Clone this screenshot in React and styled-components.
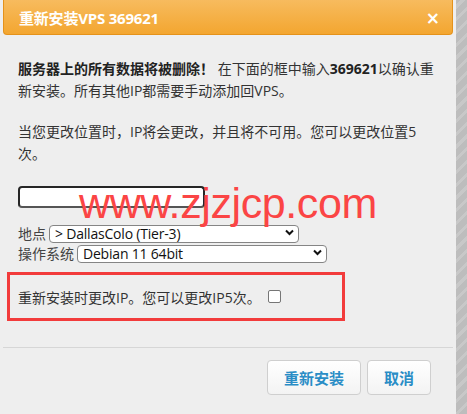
import React from "react"
import styled, { createGlobalStyle } from "styled-components"

const Global = createGlobalStyle`
  html, body {
    margin: 0;
    padding: 0;
    background: #eeeeee;
  }
  body {
    font-family: "Open Sans", "Noto Sans CJK SC", sans-serif;
  }
`

const CJK = `"Open Sans", "Noto Sans CJK SC", sans-serif`

const Page = styled.div`
  display: flex;
  width: 467px;
  height: 414px;
  overflow: hidden;
`

const Dialog = styled.div`
  position: relative;
  width: 456px;
  flex-shrink: 0;
  background: #eeeeee;
  display: flex;
  flex-direction: column;
`

const Backdrop = styled.div`
  flex: 1;
  background: repeating-linear-gradient(
    -45deg,
    #bdbdbd 0px,
    #bdbdbd 6px,
    #c8c8c8 6px,
    #c8c8c8 9px
  );
`

const Header = styled.div`
  margin: 0 3px;
  height: 35px;
  box-sizing: border-box;
  border: 1px solid #e5921a;
  border-top: none;
  border-radius: 0 0 4px 4px;
  background: linear-gradient(#f7bb5e, #f3a630);
  display: flex;
  align-items: center;
  justify-content: space-between;
  padding: 0 12px 0 15px;
`

const Title = styled.h3`
  margin: 0;
  color: #fff;
  font: bold 15px ${CJK};
  letter-spacing: -0.2px;
`

const Close = styled.span`
  color: #fff;
  font: bold 17px "DejaVu Sans", sans-serif;
  line-height: 1;
  margin-top: 2px;
`

const Body = styled.div`
  padding: 23px 18px 0 18px;
  font: 14px/22px ${CJK};
  color: #333;
`

const Para = styled.p`
  margin: 0 0 19px;
  width: 420px;
  strong {
    font-weight: bold;
    color: #222;
  }
`

const Confirm = styled.input`
  display: block;
  width: 187px;
  height: 22px;
  box-sizing: border-box;
  margin: 21px 0 16px;
  border: 2px solid #262626;
  border-bottom-color: #555;
  border-radius: 4px;
  background: #fff;
  outline: none;
`

const Field = styled.label`
  display: flex;
  align-items: center;
  gap: 3px;
  height: 18px;
  margin-bottom: 2px;
  color: #444;
  font: 14px ${CJK};
`

const SelectWrap = styled.div`
  position: relative;
  width: 250px;
  height: 18px;
`

const Select = styled.select`
  appearance: none;
  width: 100%;
  height: 100%;
  box-sizing: border-box;
  border: 1px solid #858585;
  border-radius: 4px;
  background: #fff;
  color: #111;
  font: 14px "Open Sans", sans-serif;
  letter-spacing: -0.2px;
  padding: 0 0 0 5px;
  line-height: 16px;
`

const Chevron = styled.svg`
  position: absolute;
  right: 5px;
  top: 5px;
  pointer-events: none;
`

const Callout = styled.div`
  margin: 10px 0 0 -11px;
  width: 338px;
  height: 49px;
  box-sizing: border-box;
  border: 3px solid #f23b3b;
  display: flex;
  align-items: center;
  gap: 7px;
  padding: 0 0 0 8px;
  color: #333;
  font: 14px ${CJK};
`

const Check = styled.input`
  appearance: none;
  width: 13px;
  height: 13px;
  margin: 0;
  border: 1px solid #767676;
  border-radius: 2px;
  background: #fff;
`

const Divider = styled.hr`
  margin: 26px 3px 0;
  border: none;
  border-top: 1px solid #d6d6d6;
`

const Footer = styled.div`
  display: flex;
  justify-content: flex-end;
  gap: 6px;
  padding: 12px 25px 0 0;
`

const Button = styled.button`
  width: ${p => p.w}px;
  height: 35px;
  border: 1px solid #cfcfcf;
  border-radius: 4px;
  background: linear-gradient(#ffffff, #f3f3f3);
  color: #2a8dc6;
  font: bold 15px ${CJK};
  padding: 0;
`

const Watermark = styled.div`
  position: absolute;
  left: 79px;
  top: 182px;
  font: 43px/43px "Liberation Sans", Arial, sans-serif;
  color: #fb4545;
  letter-spacing: -0.4px;
  pointer-events: none;
`

const Down = () => (
  <Chevron width="9" height="7" viewBox="0 0 9 7">
    <path d="M1 1.5 L4.5 5 L8 1.5" fill="none" stroke="#111" strokeWidth="2" />
  </Chevron>
)

export default function App() {
  return (
    <Page>
      <Global />
      <Dialog>
        <Header>
          <Title>重新安装VPS 369621</Title>
          <Close>×</Close>
        </Header>
        <Body>
          <Para>
            <strong>服务器上的所有数据将被删除！</strong> 在下面的框中输入<strong>369621</strong>以确认重新安装。所有其他IP都需要手动添加回VPS。
          </Para>
          <Para>当您更改位置时，IP将会更改，并且将不可用。您可以更改位置5次。</Para>
          <Confirm type="text" />
          <Field>
            地点
            <SelectWrap>
              <Select defaultValue="dallas">
                <option value="dallas">&gt; DallasColo (Tier-3)</option>
              </Select>
              <Down />
            </SelectWrap>
          </Field>
          <Field>
            操作系统
            <SelectWrap>
              <Select defaultValue="deb11">
                <option value="deb11">Debian 11 64bit</option>
              </Select>
              <Down />
            </SelectWrap>
          </Field>
          <Callout>
            重新安装时更改IP。您可以更改IP5次。
            <Check type="checkbox" />
          </Callout>
        </Body>
        <Divider />
        <Footer>
          <Button w={94}>重新安装</Button>
          <Button w={64}>取消</Button>
        </Footer>
        <Watermark>www.zjzjcp.com</Watermark>
      </Dialog>
      <Backdrop />
    </Page>
  )
}
